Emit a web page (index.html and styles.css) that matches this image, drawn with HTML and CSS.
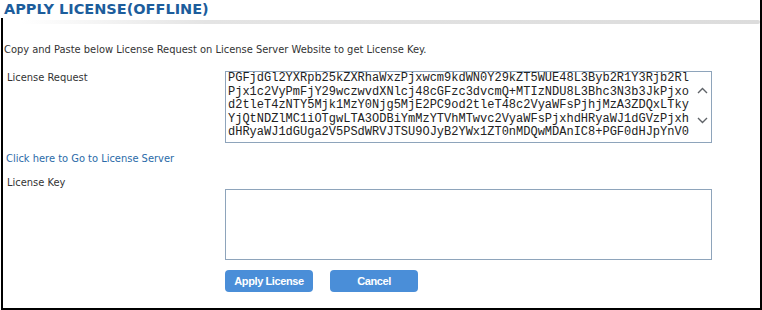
FILE: index.html
```html
<!DOCTYPE html>
<html>
<head>
<meta charset="utf-8">
<link rel="stylesheet" href="styles.css">
</head>
<body>
<div class="page">
  <h1 class="title">APPLY LICENSE(OFFLINE)</h1>
  <div class="panel">
    <div class="rule"></div>
    <p class="intro">Copy and Paste below License Request on License Server Website to get License Key.</p>
    <div class="row row-request">
      <div class="label">License Request</div>
      <div class="box box-request">
        <div class="box-text">PGFjdGl2YXRpb25kZXRhaWxzPjxwcm9kdWN0Y29kZT5WUE48L3Byb2R1Y3Rjb2Rl
Pjx1c2VyPmFjY29wczwvdXNlcj48cGFzc3dvcmQ+MTIzNDU8L3Bhc3N3b3JkPjxo
d2tleT4zNTY5Mjk1MzY0Njg5MjE2PC9od2tleT48c2VyaWFsPjhjMzA3ZDQxLTky
YjQtNDZlMC1iOTgwLTA3ODBiYmMzYTVhMTwvc2VyaWFsPjxhdHRyaWJ1dGVzPjxh
dHRyaWJ1dGUga2V5PSdWRVJTSU9OJyB2YWx1ZT0nMDQwMDAnIC8+PGF0dHJpYnV0</div>
        <div class="scroll">
          <svg class="chev" width="11" height="7" viewBox="0 0 11 7"><path d="M1 6 L5.5 1.5 L10 6" fill="none" stroke="#5f6368" stroke-width="1.4"/></svg>
          <svg class="chev" width="11" height="7" viewBox="0 0 11 7"><path d="M1 1 L5.5 5.5 L10 1" fill="none" stroke="#5f6368" stroke-width="1.4"/></svg>
        </div>
      </div>
    </div>
    <a class="link" href="#">Click here to Go to License Server</a>
    <div class="label label-key">License Key</div>
    <div class="row row-key">
      <div class="spacer"></div>
      <div class="box box-key"></div>
    </div>
    <div class="row row-buttons">
      <div class="spacer"></div>
      <div class="buttons">
        <button class="btn">Apply License</button>
        <button class="btn">Cancel</button>
      </div>
    </div>
  </div>
</div>
</body>
</html>
```

FILE: styles.css
```css
* { box-sizing: border-box; }
html, body { margin: 0; padding: 0; background: #fff; }
body {
  width: 762px;
  height: 310px;
  overflow: hidden;
  font-family: "DejaVu Sans Condensed", "DejaVu Sans", Tahoma, sans-serif;
  font-stretch: condensed;
  font-size: 11px;
  color: #333;
}
.page {
  width: 762px;
  height: 310px;
  border-right: 2px solid #000;
  display: flex;
  flex-direction: column;
}
.title {
  margin: 0;
  height: 18px;
  padding-left: 4px;
  font-family: "DejaVu Sans", Verdana, sans-serif;
  font-stretch: normal;
  font-weight: bold;
  font-size: 14.5px;
  line-height: 18px;
  color: #1c5d9c;
}
.panel {
  flex: 1;
  margin-left: 1px;
  border-left: 2px solid #000;
  border-bottom: 2px solid #000;
  display: flex;
  flex-direction: column;
}
.rule {
  margin-top: 2px;
  height: 4px;
  margin-left: 18px;
  background: linear-gradient(to right, #ffffff 0%, #e4e4e4 25%, #dcdcdc 100%);
  border-radius: 2px;
}
.intro {
  margin: 19px 0 0 1px;
  line-height: 14px;
  height: 14px;
}
.row {
  display: grid;
  grid-template-columns: 222px 487px;
}
.row-request { margin-top: 14px; }
.label {
  padding-left: 4px;
  line-height: 14px;
}
.row-request .label { padding-top: 2px; }
.box {
  border: 1px solid #8ea4bb;
  background: #fff;
}
.box-request {
  margin-top: 2px;
  height: 72px;
  display: flex;
  overflow: hidden;
}
.row-request { margin-top: 12px; }
.box-text {
  flex: 1;
  padding: 0 0 0 2px;
  font-family: "Liberation Mono", "Courier New", monospace;
  font-stretch: normal;
  font-size: 12px;
  line-height: 13.5px;
  color: #222;
  white-space: pre;
  overflow: hidden;
}
.scroll {
  width: 17px;
  display: flex;
  flex-direction: column;
  align-items: center;
  padding-top: 15px;
  gap: 23px;
}
.chev { display: block; }
.link {
  margin: 9px 0 0 3px;
  line-height: 14px;
  height: 14px;
  color: #2a6aa8;
  text-decoration: none;
}
.label-key { margin-top: 10px; }
.row-key { margin-top: -1px; }
.box-key { height: 71px; }
.row-buttons { margin-top: 10px; }
.buttons {
  display: flex;
  gap: 17px;
}
.btn {
  width: 88px;
  height: 22px;
  border: none;
  border-radius: 4px;
  background: #4a8ed8;
  color: #fff;
  font-family: "Liberation Sans", Arial, sans-serif;
  font-stretch: normal;
  font-weight: bold;
  font-size: 11px;
  letter-spacing: -0.4px;
  padding: 0;
}
```
